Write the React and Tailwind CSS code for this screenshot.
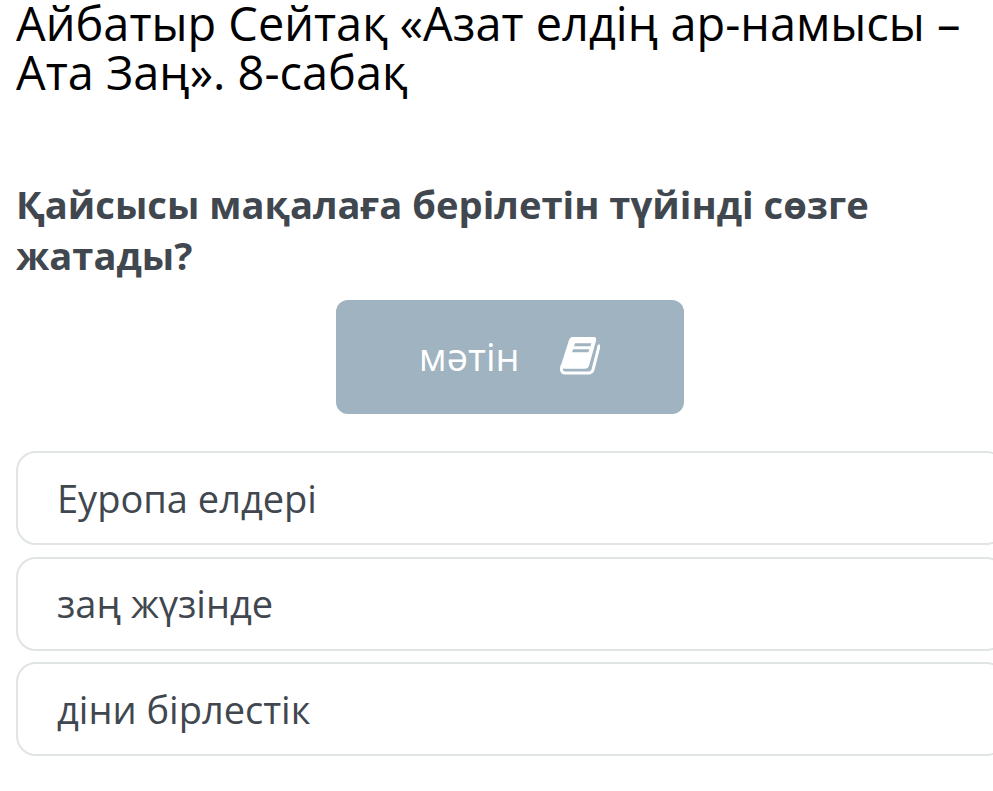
import React from "react";

const answers = ["Еуропа елдері", "заң жүзінде", "діни бірлестік"];

const BookIcon = ({ className }) => (
  <svg viewBox="57 50 122 113" fill="none" className={className}>
    <path
      d="M94 50H158Q168 50 165 61L144 136Q141 145 131 145H72Q61 145 59 138L84 59Q87 50 94 50Z"
      fill="currentColor"
    />
    <path
      d="M63 137Q57 158 74 158H142Q153 158 156 148L174 77"
      stroke="currentColor"
      strokeWidth="9"
      strokeLinecap="round"
    />
    <path
      d="M102 69H151L148 78H99ZM96 87H145L142 96H93Z"
      className="fill-[#9fb3c0]"
    />
  </svg>
);

const App = () => {
  return (
    <div className="h-[791px] w-full overflow-hidden bg-white pl-4 font-['Open_Sans','Noto_Sans',sans-serif] text-[#41474f]">
      <h1 className="-mt-px h-[100px] text-[46.9px] leading-[49px] whitespace-nowrap text-black">
        Айбатыр Сейтақ «Азат елдің ар-намысы –
        <br />
        Ата Заң». 8-сабақ
      </h1>

      <h2 className="mt-[80px] text-[38.15px] leading-[51px] font-bold whitespace-nowrap">
        Қайсысы мақалаға берілетін түйінді сөзге
        <br />
        жатады?
      </h2>

      <button className="mt-[19px] ml-[320px] flex h-[114px] w-[348px] items-center justify-center gap-[40px] rounded-[12px] bg-[#9fb3c0] pr-px pb-[2px] text-[38px] text-white">
        <span>мәтін</span>
        <BookIcon className="h-[37.7px] w-[40.7px]" />
      </button>

      <ul className="mt-[37px] flex w-[990px] flex-col gap-[11.5px]">
        {answers.map((answer) => (
          <li
            key={answer}
            className="flex h-[94px] items-center rounded-[20px] border-2 border-[#e0e4e5] pl-[39px] text-[38px]"
          >
            {answer}
          </li>
        ))}
      </ul>
    </div>
  );
};

export default App;
